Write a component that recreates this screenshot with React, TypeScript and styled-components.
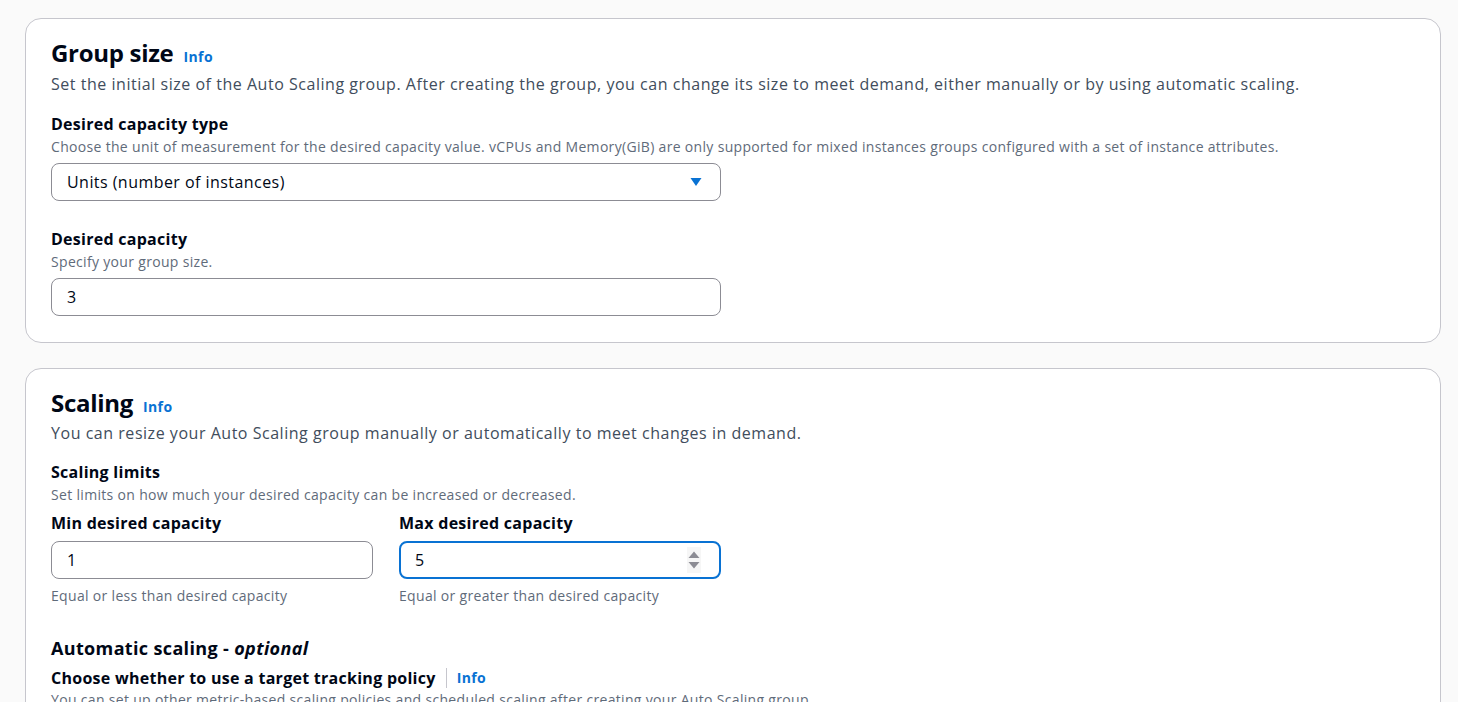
import React from "react";
import styled, { createGlobalStyle } from "styled-components";

const GlobalStyle = createGlobalStyle`
  html, body { margin: 0; padding: 0; background: #fafafa; }
  body { font-family: "Open Sans", "Noto Sans", Arial, sans-serif; color: #000716; }
  * { box-sizing: border-box; }
`;

const Page = styled.div`
  display: flex;
  flex-direction: column;
  gap: 25px;
  padding: 18px 17px 0 25px;
  width: 1458px;
  height: 702px;
  overflow: hidden;
`;

const Card = styled.section`
  background: #ffffff;
  border: 1px solid #c6c6cd;
  border-radius: 16px;
  padding: 19px 24px 26px 25px;
  display: flex;
  flex-direction: column;
`;

const TitleRow = styled.div`
  display: flex;
  align-items: baseline;
  gap: 10px;
`;

const Title = styled.h2`
  margin: 0;
  font-size: 24px;
  line-height: 30px;
  font-weight: 700;
  letter-spacing: -0.3px;
  color: #000716;
`;

const InfoLink = styled.a`
  font-size: 14px;
  line-height: 20px;
  font-weight: 700;
  letter-spacing: 0.4px;
  color: #0972d3;
  text-decoration: none;
`;

const Description = styled.p<{ $top?: number }>`
  margin: ${(p) => p.$top ?? 5}px 0 0;
  font-size: 16px;
  line-height: 22px;
  letter-spacing: 0.53px;
  color: #414d5c;
`;

const Field = styled.div<{ $top?: number }>`
  display: flex;
  flex-direction: column;
  margin-top: ${(p) => p.$top ?? 0}px;
`;

const Label = styled.div`
  font-size: 16px;
  line-height: 22px;
  font-weight: 700;
  letter-spacing: 0.27px;
  color: #000716;
`;

const Helper = styled.div<{ $top?: number }>`
  margin-top: ${(p) => p.$top ?? 2}px;
  font-size: 14px;
  line-height: 20px;
  letter-spacing: 0.32px;
  color: #5f6b7a;
`;

const Control = styled.div<{ $focused?: boolean; $width?: number; $top?: number }>`
  width: ${(p) => p.$width ?? 670}px;
  height: 38px;
  margin-top: ${(p) => p.$top ?? 0}px;
  border: ${(p) => (p.$focused ? "2px solid #0972d3" : "1px solid #8c8c94")};
  border-radius: 8px;
  background: #ffffff;
  display: flex;
  align-items: center;
  padding: 0 ${(p) => (p.$focused ? 17 : 18)}px 0 ${(p) => (p.$focused ? 14 : 15)}px;
  font-size: 16px;
  letter-spacing: 0.45px;
  color: #000716;
`;

const ControlText = styled.span`
  flex: 1;
`;

const Row = styled.div`
  display: flex;
  gap: 26px;
  margin-top: 7px;
`;

const SubHeading = styled.div`
  margin-top: 30px;
  font-size: 18px;
  line-height: 24px;
  font-weight: 700;
  letter-spacing: 0.35px;
  color: #000716;
  em { font-style: italic; }
`;

const LabelRow = styled.div`
  display: flex;
  align-items: center;
  margin-top: 7px;
`;

const Separator = styled.span`
  width: 1px;
  height: 20px;
  background: #c6c6cd;
  margin: 0 10px;
`;

const Caret = () => (
  <svg width="12" height="10" viewBox="0 0 12 10">
    <path d="M0.5 1 H11.5 L6 9 Z" fill="#0972d3" />
  </svg>
);

const Spinner = () => (
  <svg width="16" height="26" viewBox="0 0 16 26">
    <rect x="1" y="0" width="14" height="26" fill="#f6f6f6" />
    <path d="M2.5 11 L8 4.5 L13.5 11 Z" fill="#8c8c94" />
    <path d="M2.5 15 L13.5 15 L8 21.5 Z" fill="#8c8c94" />
  </svg>
);

export default function App() {
  return (
    <>
      <GlobalStyle />
      <Page>
        <Card>
          <TitleRow>
            <Title>Group size</Title>
            <InfoLink>Info</InfoLink>
          </TitleRow>
          <Description>
            Set the initial size of the Auto Scaling group. After creating the group, you can change its size to meet demand, either manually or by using automatic scaling.
          </Description>
          <Field $top={18}>
            <Label>Desired capacity type</Label>
            <Helper>
              Choose the unit of measurement for the desired capacity value. vCPUs and Memory(GiB) are only supported for mixed instances groups configured with a set of instance attributes.
            </Helper>
            <Control $top={6}>
              <ControlText>Units (number of instances)</ControlText>
              <Caret />
            </Control>
          </Field>
          <Field $top={27}>
            <Label>Desired capacity</Label>
            <Helper>Specify your group size.</Helper>
            <Control $top={6}>
              <ControlText>3</ControlText>
            </Control>
          </Field>
        </Card>
        <Card>
          <TitleRow>
            <Title>Scaling</Title>
            <InfoLink>Info</InfoLink>
          </TitleRow>
          <Description $top={4}>
            You can resize your Auto Scaling group manually or automatically to meet changes in demand.
          </Description>
          <Field $top={17}>
            <Label>Scaling limits</Label>
            <Helper>Set limits on how much your desired capacity can be increased or decreased.</Helper>
          </Field>
          <Row>
            <Field>
              <Label>Min desired capacity</Label>
              <Control $width={322} $top={7}>
                <ControlText>1</ControlText>
              </Control>
              <Helper $top={7}>Equal or less than desired capacity</Helper>
            </Field>
            <Field>
              <Label>Max desired capacity</Label>
              <Control $width={322} $top={7} $focused>
                <ControlText>5</ControlText>
                <Spinner />
              </Control>
              <Helper $top={7}>Equal or greater than desired capacity</Helper>
            </Field>
          </Row>
          <SubHeading>
            Automatic scaling - <em>optional</em>
          </SubHeading>
          <LabelRow>
            <Label>Choose whether to use a target tracking policy</Label>
            <Separator />
            <InfoLink>Info</InfoLink>
          </LabelRow>
          <Helper $top={1}>
            You can set up other metric-based scaling policies and scheduled scaling after creating your Auto Scaling group.
          </Helper>
        </Card>
      </Page>
    </>
  );
}
